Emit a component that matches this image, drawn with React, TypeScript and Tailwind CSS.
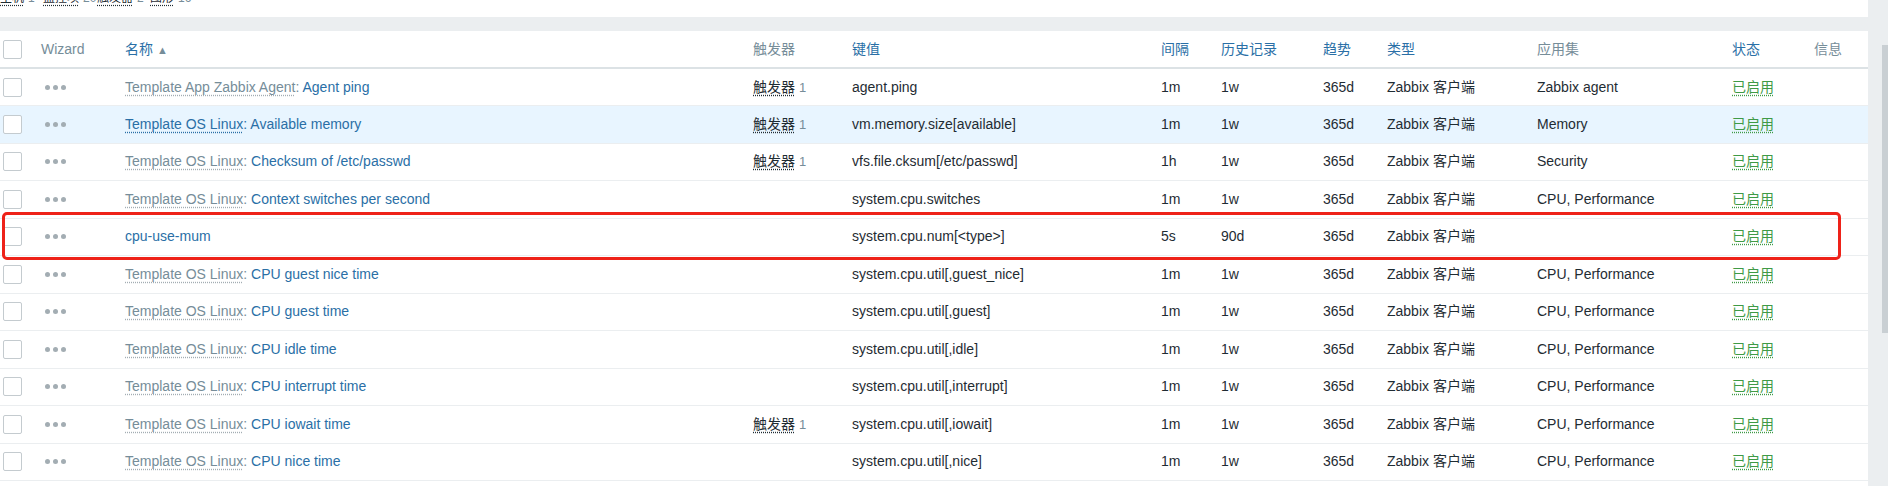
import { Fragment } from "react";

const FONT = '"Liberation Sans", Arial, "Noto Sans CJK SC", sans-serif';

type Row = {
  prefix?: string;
  name: string;
  triggers?: boolean;
  key: string;
  interval: string;
  history: string;
  trends: string;
  apps: string;
  hovered?: boolean;
};

const rows: Row[] = [
  { prefix: "Template App Zabbix Agent", name: "Agent ping", triggers: true, key: "agent.ping", interval: "1m", history: "1w", trends: "365d", apps: "Zabbix agent" },
  { prefix: "Template OS Linux", name: "Available memory", triggers: true, key: "vm.memory.size[available]", interval: "1m", history: "1w", trends: "365d", apps: "Memory", hovered: true },
  { prefix: "Template OS Linux", name: "Checksum of /etc/passwd", triggers: true, key: "vfs.file.cksum[/etc/passwd]", interval: "1h", history: "1w", trends: "365d", apps: "Security" },
  { prefix: "Template OS Linux", name: "Context switches per second", key: "system.cpu.switches", interval: "1m", history: "1w", trends: "365d", apps: "CPU, Performance" },
  { name: "cpu-use-mum", key: "system.cpu.num[<type>]", interval: "5s", history: "90d", trends: "365d", apps: "" },
  { prefix: "Template OS Linux", name: "CPU guest nice time", key: "system.cpu.util[,guest_nice]", interval: "1m", history: "1w", trends: "365d", apps: "CPU, Performance" },
  { prefix: "Template OS Linux", name: "CPU guest time", key: "system.cpu.util[,guest]", interval: "1m", history: "1w", trends: "365d", apps: "CPU, Performance" },
  { prefix: "Template OS Linux", name: "CPU idle time", key: "system.cpu.util[,idle]", interval: "1m", history: "1w", trends: "365d", apps: "CPU, Performance" },
  { prefix: "Template OS Linux", name: "CPU interrupt time", key: "system.cpu.util[,interrupt]", interval: "1m", history: "1w", trends: "365d", apps: "CPU, Performance" },
  { prefix: "Template OS Linux", name: "CPU iowait time", triggers: true, key: "system.cpu.util[,iowait]", interval: "1m", history: "1w", trends: "365d", apps: "CPU, Performance" },
  { prefix: "Template OS Linux", name: "CPU nice time", key: "system.cpu.util[,nice]", interval: "1m", history: "1w", trends: "365d", apps: "CPU, Performance" },
];

const widths = [41, 84, 628, 99, 309, 60, 102, 64, 150, 195, 82, 54];

function Checkbox() {
  return (
    <span className="ml-[3px] block h-[19px] w-[19px] rounded-[2px] border border-[#c4cbcf] bg-white" />
  );
}

function Dots() {
  return (
    <span className="ml-[4px] flex items-center gap-[3px]">
      <span className="h-[5px] w-[5px] rounded-full bg-[#a3adb3]" />
      <span className="h-[5px] w-[5px] rounded-full bg-[#a3adb3]" />
      <span className="h-[5px] w-[5px] rounded-full bg-[#a3adb3]" />
    </span>
  );
}

const dotted = "underline decoration-dotted underline-offset-[3px]";

function TopLinks() {
  const items = [
    { label: "主机", n: "1", w: "w-[43px]" },
    { label: "监控项", n: "20", w: "w-[54px]" },
    { label: "触发器", n: "2", w: "w-[53px]" },
    { label: "图形", n: "16", w: "w-[50px]" },
  ];
  return (
    <div className="h-[17px] shrink-0 overflow-hidden bg-white">
      <div className="-mt-[11px] flex text-[12px] text-[#1f2c33]">
        {items.map((it) => (
          <span key={it.label} className={`${it.w} whitespace-nowrap`}>
            <span className={`${dotted} decoration-[#1f2c33]`}>{it.label}</span>
            <span className="ml-[4px] text-[#768d99]">{it.n}</span>
          </span>
        ))}
      </div>
    </div>
  );
}

export default function App() {
  return (
    <div
      className="flex h-[486px] w-[1888px] overflow-hidden bg-[#ebeef0]"
      style={{ fontFamily: FONT }}
    >
      <div className="flex w-[1868px] shrink-0 flex-col">
        <TopLinks />
        <div className="h-[14px] shrink-0 bg-[#ebeef0]" />
        <div className="relative min-h-0 flex-1 overflow-hidden bg-white">
          <table className="w-[1868px] table-fixed border-collapse text-[14px] text-[#1f2c33]">
            <colgroup>
              {widths.map((w, i) => (
                <col key={i} style={{ width: w }} />
              ))}
            </colgroup>
            <thead>
              <tr className="h-[37px] border-b-2 border-[#dce2e5] text-left">
                <th className="p-0 font-normal">
                  <Checkbox />
                </th>
                <th className="p-0 font-normal text-[#768d99]">Wizard</th>
                <th className="p-0 font-normal text-[#2a6fa6]">
                  名称
                  <span className="ml-[4px] inline-block align-middle text-[11px] text-[#768d99]">▲</span>
                </th>
                <th className="p-0 font-normal text-[#768d99]">触发器</th>
                <th className="p-0 font-normal text-[#2a6fa6]">键值</th>
                <th className="p-0 font-normal text-[#2a6fa6]">间隔</th>
                <th className="p-0 font-normal text-[#2a6fa6]">历史记录</th>
                <th className="p-0 font-normal text-[#2a6fa6]">趋势</th>
                <th className="p-0 font-normal text-[#2a6fa6]">类型</th>
                <th className="p-0 font-normal text-[#768d99]">应用集</th>
                <th className="p-0 font-normal text-[#2a6fa6]">状态</th>
                <th className="p-0 font-normal text-[#768d99]">信息</th>
              </tr>
            </thead>
            <tbody>
              {rows.map((r, i) => (
                <tr
                  key={i}
                  className={`h-[37.5px] border-b border-[#ebeef0] ${r.hovered ? "bg-[#e8f5ff]" : ""}`}
                >
                  <td className="p-0">
                    <Checkbox />
                  </td>
                  <td className="p-0">
                    <Dots />
                  </td>
                  <td className="whitespace-nowrap p-0">
                    {r.prefix ? (
                      <Fragment>
                        <span
                          className={`${dotted} ${r.hovered ? "text-[#2a6fa6] decoration-[#2a6fa6]" : "text-[#768d99] decoration-[#a3adb3]"}`}
                        >
                          {r.prefix}
                        </span>
                        <span className={r.hovered ? "text-[#2a6fa6]" : "text-[#768d99]"}>: </span>
                      </Fragment>
                    ) : null}
                    <span className="text-[#2a6fa6]">{r.name}</span>
                  </td>
                  <td className="whitespace-nowrap p-0">
                    {r.triggers ? (
                      <Fragment>
                        <span className={`${dotted} decoration-[#1f2c33]`}>触发器</span>
                        <span className="ml-[4px] text-[13px] text-[#768d99]">1</span>
                      </Fragment>
                    ) : null}
                  </td>
                  <td className="whitespace-nowrap p-0">{r.key}</td>
                  <td className="p-0">{r.interval}</td>
                  <td className="p-0">{r.history}</td>
                  <td className="p-0">{r.trends}</td>
                  <td className="whitespace-nowrap p-0">Zabbix 客户端</td>
                  <td className="whitespace-nowrap p-0">{r.apps}</td>
                  <td className="p-0">
                    <span className={`${dotted} text-[#3f9a46] decoration-[#3f9a46]`}>已启用</span>
                  </td>
                  <td className="p-0" />
                </tr>
              ))}
              <tr className="h-[37px]">
                <td className="p-0" colSpan={12} />
              </tr>
            </tbody>
          </table>
          {/* annotation box around the custom item */}
          <div className="pointer-events-none absolute left-[2px] top-[181px] h-[48px] w-[1839px] rounded-[5px] border-[3px] border-[#ee2219]" />
        </div>
      </div>
      <div className="flex w-[20px] shrink-0 justify-end pt-[45px]">
        <div className="h-[288px] w-[6px] bg-[#c9cfd3]" />
      </div>
    </div>
  );
}
